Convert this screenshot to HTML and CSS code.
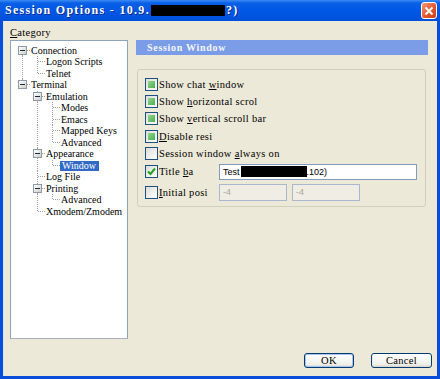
FILE: index.html
```html
<!DOCTYPE html>
<html lang="en">
<head>
    <meta charset="UTF-8">
    <title>Session Options</title>
    <link rel="stylesheet" href="styles.css">
</head>
<body>
    <div class="window">
        <div class="titlebar">
            <span class="title-text">Session Options - 10.9.</span>
            <span class="redact title-redact"></span>
            <span class="title-text">?)</span>
            <span class="close-btn">
                <svg width="10" height="10" viewBox="0 0 10 10"><path d="M1.5 1.5L8.5 8.5M8.5 1.5L1.5 8.5" stroke="#fff" stroke-width="2"/></svg>
            </span>
        </div>
        <div class="frame">
            <div class="main">
                <div class="left-col">
                    <div class="cat-label"><u>C</u>ategory</div>
                    <div class="tree">
                        <div class="node"><span class="cell first"><span class="exp"></span></span><span class="label">Connection</span></div>
                        <div class="node"><span class="cell v"></span><span class="cell t"></span><span class="label">Logon Scripts</span></div>
                        <div class="node"><span class="cell v"></span><span class="cell l"></span><span class="label">Telnet</span></div>
                        <div class="node"><span class="cell l"><span class="exp"></span></span><span class="label">Terminal</span></div>
                        <div class="node"><span class="cell"></span><span class="cell t"><span class="exp"></span></span><span class="label">Emulation</span></div>
                        <div class="node"><span class="cell"></span><span class="cell v"></span><span class="cell t"></span><span class="label">Modes</span></div>
                        <div class="node"><span class="cell"></span><span class="cell v"></span><span class="cell t"></span><span class="label">Emacs</span></div>
                        <div class="node"><span class="cell"></span><span class="cell v"></span><span class="cell t"></span><span class="label">Mapped Keys</span></div>
                        <div class="node"><span class="cell"></span><span class="cell v"></span><span class="cell l"></span><span class="label">Advanced</span></div>
                        <div class="node"><span class="cell"></span><span class="cell t"><span class="exp"></span></span><span class="label">Appearance</span></div>
                        <div class="node"><span class="cell"></span><span class="cell v"></span><span class="cell l"></span><span class="label selected">Window</span></div>
                        <div class="node"><span class="cell"></span><span class="cell t"></span><span class="label">Log File</span></div>
                        <div class="node"><span class="cell"></span><span class="cell t"><span class="exp"></span></span><span class="label">Printing</span></div>
                        <div class="node"><span class="cell"></span><span class="cell v"></span><span class="cell l"></span><span class="label">Advanced</span></div>
                        <div class="node"><span class="cell"></span><span class="cell l"></span><span class="label">Xmodem/Zmodem</span></div>
                    </div>
                </div>

                <div class="right-col">
                    <div class="section-header">Session Window</div>
                    <div class="group">
                        <div class="row"><span class="cb mixed"></span><span class="text">Show chat <u>w</u>indow</span></div>
                        <div class="row"><span class="cb mixed"></span><span class="text">Show <u>h</u>orizontal scrol</span></div>
                        <div class="row"><span class="cb mixed"></span><span class="text">Show <u>v</u>ertical scroll bar</span></div>
                        <div class="row"><span class="cb mixed"></span><span class="text"><u>D</u>isable resi</span></div>
                        <div class="row"><span class="cb"></span><span class="text">Session window <u>a</u>lways on</span></div>
                        <div class="row input-row">
                            <span class="cb checked">
                                <svg width="9" height="9" viewBox="0 0 9 9"><path d="M1 4.5L3.5 7L8 1.5" fill="none" stroke="#21a121" stroke-width="2"/></svg>
                            </span>
                            <span class="field-label">Title <u>b</u>a</span>
                            <div class="input wide">Test<span class="redact input-redact"></span>.102)</div>
                        </div>
                        <div class="row input-row pos-row">
                            <span class="cb"></span>
                            <span class="field-label"><u>I</u>nitial posi</span>
                            <div class="input small disabled">-4</div>
                            <div class="input small disabled">-4</div>
                        </div>
                    </div>
                </div>
            </div>

            <div class="buttons">
                <button class="btn default">OK</button>
                <button class="btn cancel">Cancel</button>
            </div>
        </div>
    </div>
</body>
</html>
```

FILE: styles.css
```css
body {
    margin: 0;
    padding: 0;
    background-color: #ece9d8;
    font-family: "Liberation Serif", "Times New Roman", serif;
    font-size: 10.5px;
    letter-spacing: 0.3px;
    color: #000;
}

u {
    text-decoration: underline;
}

.window {
    width: 440px;
    height: 379px;
    display: flex;
    flex-direction: column;
    overflow: hidden;
}

/* Title bar */
.titlebar {
    height: 21px;
    flex: none;
    display: flex;
    align-items: center;
    padding-left: 5px;
    background: linear-gradient(to bottom, #3b8cf5 0, #0a5fe6 3px, #0058e6 50%, #004fd8 100%);
}

.title-text {
    color: #fff;
    font-weight: bold;
    font-size: 12px;
    letter-spacing: 1.3px;
    text-shadow: 1px 1px 0 #0a2a8c;
}

.redact {
    display: inline-block;
    background-color: #000;
}

.title-redact {
    width: 74px;
    height: 11px;
    margin: 0 1px;
}

.close-btn {
    margin-left: auto;
    margin-right: 3px;
    width: 16px;
    height: 17px;
    box-sizing: border-box;
    border: 1px solid #fff;
    border-radius: 3px;
    background: linear-gradient(135deg, #f29a7c, #e5582e 55%, #cc3f14);
    display: flex;
    align-items: center;
    justify-content: center;
}

/* Dialog body */
.frame {
    flex: 1;
    border: 3px solid #0a4ddb;
    border-top: none;
    padding: 6px 5px 0 7px;
    display: flex;
    flex-direction: column;
    box-shadow: inset 1px 0 0 #d8e4f8;
}

.main {
    display: flex;
}

.left-col {
    width: 118px;
    flex: none;
}

.cat-label {
    height: 13px;
    line-height: 12px;
}

.tree {
    --dv: repeating-linear-gradient(to bottom, #a0a0a0 0 1px, transparent 1px 2px);
    --dh: repeating-linear-gradient(to right, #a0a0a0 0 1px, transparent 1px 2px);
    height: 299px;
    box-sizing: border-box;
    background: #fff;
    border: 1px solid #8fa3bd;
    border-bottom-color: #a8b0bb;
    padding: 3.5px 0 0 4px;
    font-size: 10px;
    letter-spacing: 0;
    overflow: hidden;
}

.node {
    display: flex;
    height: 11.5px;
    line-height: 11.5px;
    white-space: nowrap;
}

.cell {
    width: 15px;
    flex: none;
    display: flex;
    align-items: center;
    justify-content: center;
}

.cell.v {
    background: var(--dv) 7px 0 / 1px 100% no-repeat;
}

.cell.t {
    background: var(--dv) 7px 0 / 1px 100% no-repeat, var(--dh) 8px 50% / 7px 1px no-repeat;
}

.cell.l {
    background: var(--dv) 7px 0 / 1px 50% no-repeat, var(--dh) 8px 50% / 7px 1px no-repeat;
}

.cell.first {
    background: var(--dv) 7px 100% / 1px 50% no-repeat, var(--dh) 8px 50% / 7px 1px no-repeat;
}

.exp {
    width: 9px;
    height: 9px;
    box-sizing: border-box;
    border: 1px solid #8d9aa8;
    background: linear-gradient(135deg, #fff, #cfcfc6);
    display: flex;
    align-items: center;
    justify-content: center;
}

.exp::after {
    content: "";
    width: 5px;
    height: 1px;
    background: #1e2a3a;
}

.label {
    padding: 0 1px;
}

.label.selected {
    background: #316ac5;
    color: #fff;
    height: 10px;
    line-height: 10px;
    margin-top: 1px;
    padding: 0 3px 0 2px;
}

/* Right side */
.right-col {
    width: 292px;
    flex: none;
    margin-left: 8px;
}

.section-header {
    margin-top: 13px;
    height: 15px;
    line-height: 15px;
    background: #7b9ce6;
    color: #f4f6ff;
    font-weight: bold;
    font-size: 10px;
    letter-spacing: 0.7px;
    padding-left: 11px;
}

.group {
    margin: 14px 2px 0 1px;
    height: 138px;
    box-sizing: border-box;
    border: 1px solid #d0d0bf;
    border-radius: 3px;
    padding: 5.5px 7px 0;
}

.row {
    display: flex;
    align-items: center;
    height: 17.4px;
    white-space: nowrap;
}

.row.input-row {
    height: 19px;
}

.row.pos-row {
    margin-top: 1.5px;
}

.cb {
    width: 13px;
    height: 13px;
    flex: none;
    box-sizing: border-box;
    border: 1px solid #1c5180;
    background: linear-gradient(135deg, #dcdcd7, #fff);
    display: flex;
    align-items: center;
    justify-content: center;
}

.cb.mixed::after {
    content: "";
    width: 7px;
    height: 7px;
    background: linear-gradient(135deg, #8fd68f, #4fae4f);
}

.text {
    padding-left: 1px;
}

.field-label {
    width: 61px;
    flex: none;
    padding-left: 1px;
    box-sizing: border-box;
}

.input {
    height: 16px;
    box-sizing: border-box;
    border: 1px solid #7f9db9;
    background: #fff;
    line-height: 14px;
    padding-left: 3px;
    font-family: "Liberation Sans", Arial, sans-serif;
    font-size: 9px;
    letter-spacing: 0;
}

.input.wide {
    width: 198px;
}

.input-redact {
    width: 66px;
    height: 11px;
    vertical-align: -2px;
    margin-left: 1px;
}

.input.small {
    width: 68px;
    height: 17px;
    margin-right: 5px;
}

.input.disabled {
    background: #f0eee4;
    border-color: #a9b8cf;
    color: #aca899;
}

/* Buttons */
.buttons {
    display: flex;
    justify-content: flex-end;
    gap: 17px;
    margin-top: 14px;
}

.btn {
    height: 15px;
    padding: 0;
    font-family: "Liberation Serif", "Times New Roman", serif;
    font-size: 10.5px;
    letter-spacing: 0.3px;
    line-height: 13px;
    color: #000;
    border: 1px solid #003c74;
    border-radius: 3px;
    background: linear-gradient(to bottom, #fff, #f0f0ea 80%, #d6d0c5);
}

.btn.default {
    width: 50px;
    box-shadow: inset 0 0 0 1px #a9c3f0;
}

.btn.cancel {
    width: 61px;
}
```
